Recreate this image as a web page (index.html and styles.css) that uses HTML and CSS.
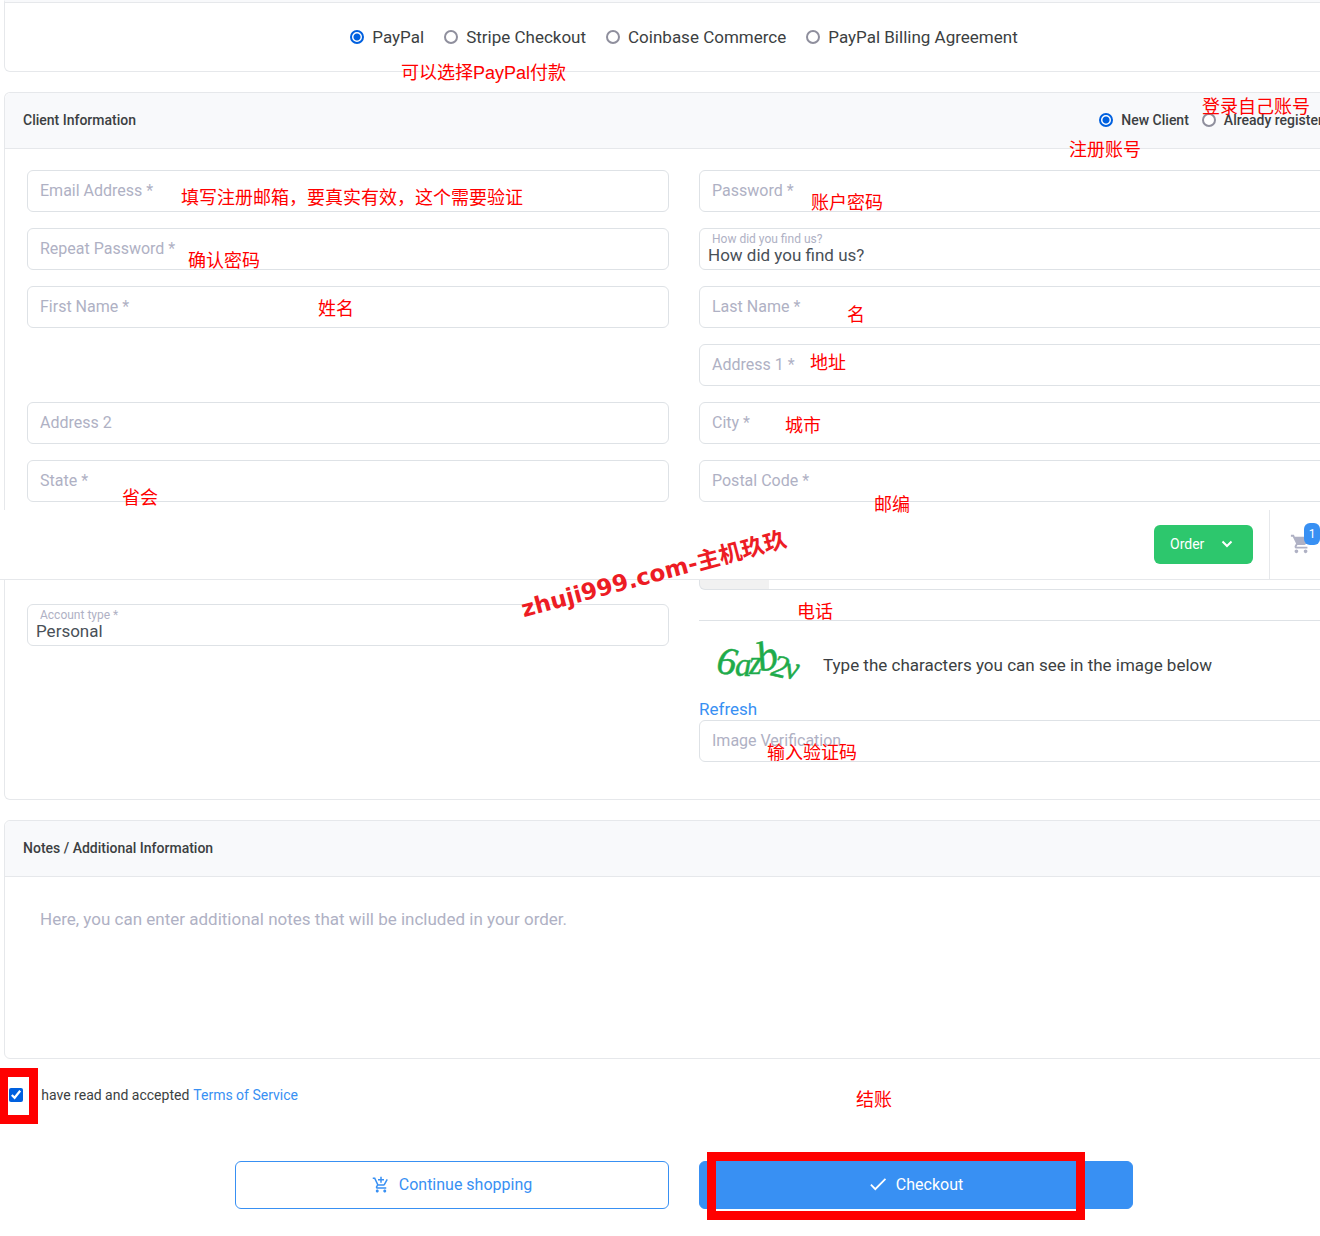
FILE: index.html
```
<!DOCTYPE html>
<html lang="en">
<head>
    <meta charset="UTF-8">
    <meta name="viewport" content="width=device-width, initial-scale=1.0">
    <title>Checkout</title>
    <link rel="stylesheet" href="styles.css">
</head>
<body>
    <form class="page">
        <!-- Payment method -->
        <section class="card payment">
            <div class="payment-options">
                <label><input type="radio" name="payment" checked> PayPal</label>
                <label><input type="radio" name="payment"> Stripe Checkout</label>
                <label><input type="radio" name="payment"> Coinbase Commerce</label>
                <label><input type="radio" name="payment"> PayPal Billing Agreement</label>
            </div>
        </section>

        <!-- Client information -->
        <section class="card client-top">
            <div class="card-header">
                <h2>Client Information</h2>
                <div class="client-type">
                    <label><input type="radio" name="client" checked> New Client</label>
                    <label><input type="radio" name="client"> Already registered?</label>
                </div>
            </div>
            <div class="form-grid">
                <div class="field">
                    <input type="email" id="email">
                    <label for="email">Email Address *</label>
                </div>
                <div class="field">
                    <input type="password" id="password">
                    <label for="password">Password *</label>
                </div>
                <div class="field">
                    <input type="password" id="password2">
                    <label for="password2">Repeat Password *</label>
                </div>
                <div class="field filled">
                    <select id="source"><option>How did you find us?</option></select>
                    <label for="source">How did you find us?</label>
                </div>
                <div class="field">
                    <input type="text" id="firstname">
                    <label for="firstname">First Name *</label>
                </div>
                <div class="field">
                    <input type="text" id="lastname">
                    <label for="lastname">Last Name *</label>
                </div>
                <div class="field right">
                    <input type="text" id="address1">
                    <label for="address1">Address 1 *</label>
                </div>
                <div class="field">
                    <input type="text" id="address2">
                    <label for="address2">Address 2</label>
                </div>
                <div class="field">
                    <input type="text" id="city">
                    <label for="city">City *</label>
                </div>
                <div class="field">
                    <input type="text" id="state">
                    <label for="state">State *</label>
                </div>
                <div class="field">
                    <input type="text" id="postcode">
                    <label for="postcode">Postal Code *</label>
                </div>
            </div>
        </section>

        <!-- Top bar -->
        <nav class="topbar">
            <button type="button" class="order-button">Order
                <svg width="12" height="8" viewBox="0 0 12 8"><path d="M1.5 1.5L6 6l4.500-4.500" fill="none" stroke="#fff" stroke-width="2"/></svg>
            </button>
            <a href="#cart" class="cart" aria-label="Cart">
                <svg width="22" height="22" viewBox="0 0 24 24"><path fill="#afb1c4" d="M7 18c-1.1 0-1.99.9-1.99 2S5.9 22 7 22s2-.9 2-2-.9-2-2-2zM1 2v2h2l3.6 7.59-1.35 2.45c-.16.28-.25.61-.25.96 0 1.1.9 2 2 2h12v-2H7.42c-.14 0-.25-.11-.25-.25l.03-.12.9-1.63h7.45c.75 0 1.41-.41 1.75-1.03l3.58-6.49A1 1 0 0 0 20 4H5.21l-.94-2H1zm16 16c-1.1 0-1.99.9-1.99 2s.89 2 1.99 2 2-.9 2-2-.9-2-2-2z"/></svg>
                <span class="badge">1</span>
            </a>
        </nav>

        <section class="card client-bottom">
            <div class="column">
                <div class="field filled">
                    <select id="account"><option>Personal</option></select>
                    <label for="account">Account type *</label>
                </div>
            </div>
            <div class="column">
                <div class="phone"></div>
                <div class="captcha">
                    <svg width="88" height="44" viewBox="0 0 88 44" fill="#1eab4b" stroke="#1eab4b" stroke-width=".5" font-family="Liberation Serif, serif" font-style="italic">
                        <text x="0" y="34" font-size="39" transform="rotate(10 10 34)">6</text>
                        <text x="20" y="36" font-size="33">a</text>
                        <text x="34" y="34" font-size="33">z</text>
                        <text x="45" y="32" font-size="42" transform="rotate(-14 45 32)">b</text>
                        <text x="55" y="35" font-size="32" transform="rotate(14 55 35)">2</text>
                        <text x="69" y="38" font-size="32" transform="rotate(6 69 38)">v</text>
                    </svg>
                    <span>Type the characters you can see in the image below</span>
                </div>
                <a href="#refresh" class="refresh">Refresh</a>
                <div class="field">
                    <input type="text" id="verification">
                    <label for="verification">Image Verification</label>
                </div>
            </div>
        </section>

        <!-- Notes -->
        <section class="card">
            <div class="card-header">
                <h2><label for="notes">Notes / Additional Information</label></h2>
            </div>
            <textarea id="notes" placeholder="Here, you can enter additional notes that will be included in your order."></textarea>
        </section>

        <div class="terms">
            <input type="checkbox" id="terms" checked>
            <label for="terms">I have read and accepted</label>
            <a href="#tos">Terms of Service</a>
        </div>

        <div class="actions">
            <button type="button" class="action outline">
                <svg width="18" height="18" viewBox="0 0 24 24"><path fill="#3890f3" d="M11 9h2V6h3V4h-3V1h-2v3H8v2h3v3zm-4 9c-1.1 0-1.99.9-1.99 2S5.9 22 7 22s2-.9 2-2-.9-2-2-2zm10 0c-1.1 0-1.99.9-1.99 2s.89 2 1.99 2 2-.9 2-2-.9-2-2-2zm-9.83-3.25l.03-.12.9-1.63h7.45c.75 0 1.41-.41 1.75-1.03l3.86-7.01L19.42 4h-.01l-1.1 2-2.76 5H8.53l-.13-.27L6.16 6l-.95-2-.94-2H1v2h2l3.6 7.59-1.35 2.45c-.16.28-.25.61-.25.96 0 1.1.9 2 2 2h12v-2H7.42c-.13 0-.25-.11-.25-.25z"/></svg>
                Continue shopping
            </button>
            <button type="submit" class="action primary">
                <svg width="18" height="18" viewBox="2 3 20 20"><path fill="#fff" d="M9 16.17L4.83 12l-1.42 1.41L9 19 21 7l-1.41-1.41z"/></svg>
                Checkout
            </button>
        </div>
    </form>

    <!-- Annotations -->
    <div class="notes" lang="zh-CN">
        <span class="note n-paypal">可以选择PayPal付款</span>
        <span class="note n-login">登录自己账号</span>
        <span class="note n-register">注册账号</span>
        <span class="note n-email">填写注册邮箱，要真实有效，这个需要验证</span>
        <span class="note n-password">账户密码</span>
        <span class="note n-repeat">确认密码</span>
        <span class="note n-name">姓名</span>
        <span class="note n-last">名</span>
        <span class="note n-address">地址</span>
        <span class="note n-city">城市</span>
        <span class="note n-state">省会</span>
        <span class="note n-postcode">邮编</span>
        <span class="note n-phone">电话</span>
        <span class="note n-captcha">输入验证码</span>
        <span class="note n-checkout">结账</span>
        <span class="watermark">zhuji999.com-主机玖玖</span>
        <span class="frame frame-terms"></span>
        <span class="frame frame-checkout"></span>
    </div>
</body>
</html>
```
FILE: styles.css
```
* {
    box-sizing: border-box;
}
body {
    margin: 0;
    position: relative;
    overflow-x: hidden;
    background: #fff;
    color: #3c3f42;
    font: 17px/20px Roboto, "Noto Sans CJK SC", sans-serif;
}
input, select, textarea, button {
    font: inherit;
    color: inherit;
}
a {
    color: #3890f3;
    text-decoration: none;
}
/* the form is wider than the window */
.page {
    margin: 0 -44px 0 4px;
    padding-bottom: 27px;
}
.card {
    border: 1px solid #e6e8eb;
    border-radius: 6px;
    margin-bottom: 20px;
}
.card-header {
    display: flex;
    justify-content: space-between;
    align-items: center;
    height: 56px;
    padding: 0 18px 1px;
    background: #f8f9fb;
    border-bottom: 1px solid #e6e8eb;
    border-radius: 6px 6px 0 0;
    font-size: 14px;
    font-weight: 500;
}
.card-header h2 {
    margin: 0;
    font-size: 14px;
    font-weight: 500;
}
.payment {
    border-top: 2px solid #f8f9fb;
    border-radius: 0 0 6px 6px;
}
.payment-options {
    display: flex;
    justify-content: center;
    gap: 20px;
    border-top: 1px solid #e6e8eb;
    padding: 24px 0;
}
.payment-options label, .client-type label {
    display: flex;
    align-items: center;
    gap: 8px;
}
.client-type {
    display: flex;
    gap: 13px;
}
input[type="radio"] {
    appearance: none;
    width: 14px;
    height: 14px;
    margin: 0;
    border: 2px solid #8f8f9d;
    border-radius: 50%;
    background: #fff;
}
input[type="radio"]:checked {
    border-color: #0060df;
    background: radial-gradient(#0060df 3px, #fff 4px);
}

/* Fields */
.form-grid {
    display: grid;
    grid-template-columns: 1fr 1fr;
    gap: 16px 30px;
    padding: 21px 22px 8px;
}
.field {
    position: relative;
    height: 42px;
}
.field.right {
    grid-column: 2;
}
.field input, .field select {
    display: block;
    width: 100%;
    height: 100%;
    padding: 0 12px;
    border: 1px solid #dee2e6;
    border-radius: 6px;
    background: #fff;
}
.field label {
    position: absolute;
    left: 13px;
    top: 11px;
    color: #afb1c4;
    font-size: 16px;
}
.field select {
    appearance: none;
    padding: 12px 8px 0;
    color: #495057;
}
.field.filled label {
    top: 4px;
    font-size: 12px;
    line-height: 14px;
}
.client-top {
    margin: 0;
    border-bottom: 0;
    border-radius: 6px 6px 0 0;
}
.client-bottom {
    display: grid;
    grid-template-columns: 1fr 1fr;
    gap: 30px;
    padding: 0 22px 37px;
    border-top: 0;
    border-radius: 0 0 6px 6px;
}
.client-bottom > .column:first-child {
    padding-top: 24px;
}
.phone {
    height: 41px;
    border-bottom: 1px solid #dee2e6;
}
.phone::before {
    content: "";
    display: block;
    height: 9px;
    border: 1px solid #dee2e6;
    border-top: 0;
    border-radius: 0 0 6px 6px;
    background: linear-gradient(to right, #f1f1f1 69px, #fff 69px);
}
.captcha {
    display: flex;
    align-items: center;
    gap: 20px;
    height: 78px;
    padding: 10px 0 0 16px;
}
.captcha svg {
    margin-bottom: 6px;
    overflow: visible;
}
.refresh {
    display: block;
    height: 21px;
}

/* Top bar */
.topbar {
    display: flex;
    justify-content: flex-end;
    align-items: center;
    gap: 16px;
    height: 70px;
    margin: 0 44px 0 -4px;
    border-bottom: 1px solid #e6e8eb;
    background: #fff;
}
.order-button {
    display: flex;
    justify-content: space-between;
    align-items: center;
    width: 99px;
    height: 39px;
    padding: 0 20px 1px 16px;
    border: 0;
    border-radius: 6px;
    background: #2dc76d;
    color: #fff;
    font-size: 14px;
}
.cart {
    position: relative;
    width: 51px;
    height: 100%;
    padding: 23px 0 0 20px;
    border-left: 1px solid #e6e8eb;
}
.badge {
    position: absolute;
    top: 13px;
    right: 0;
    width: 16px;
    height: 22px;
    border-radius: 6px;
    background: #3890f3;
    color: #fff;
    font-size: 12px;
    line-height: 22px;
    text-align: center;
}

textarea {
    display: block;
    width: 100%;
    height: 181px;
    padding: 32px 35px;
    border: 0;
    background: none;
    resize: none;
}
textarea::placeholder {
    color: #afb1c4;
}
.terms {
    display: flex;
    align-items: center;
    gap: 4px;
    padding: 6px 5px;
    font-size: 14px;
}
.terms input {
    width: 14px;
    height: 14px;
    margin: 0 7px 0 0;
    accent-color: #0060df;
}
.actions {
    display: flex;
    justify-content: center;
    gap: 30px;
    margin-top: 50px;
}
.action {
    display: flex;
    justify-content: center;
    align-items: center;
    gap: 9px;
    width: 33%;
    max-width: 434px;
    height: 48px;
    padding-bottom: 2px;
    border: 1px solid #3890f3;
    border-radius: 6px;
    font-size: 16px;
}
.outline {
    background: #fff;
    color: #3890f3;
}
.primary {
    background: #3890f3;
    color: #fff;
}

/* Annotations */
.note {
    position: absolute;
    color: #f00;
    font: 18px/24px "Liberation Sans", "Noto Sans CJK SC", sans-serif;
    white-space: nowrap;
}
.n-paypal { left: 401px; top: 61px; }
.n-login { left: 1202px; top: 95px; }
.n-register { left: 1069px; top: 138px; }
.n-email { left: 181px; top: 186px; }
.n-password { left: 811px; top: 191px; }
.n-repeat { left: 188px; top: 249px; }
.n-name { left: 318px; top: 297px; }
.n-last { left: 847px; top: 303px; }
.n-address { left: 810px; top: 351px; }
.n-city { left: 785px; top: 414px; }
.n-state { left: 122px; top: 486px; }
.n-postcode { left: 874px; top: 493px; }
.n-phone { left: 797px; top: 600px; }
.n-captcha { left: 767px; top: 741px; }
.n-checkout { left: 856px; top: 1088px; }
.watermark {
    position: absolute;
    left: 517px;
    top: 559px;
    color: #ed1c24;
    font: bold 23px/30px "DejaVu Sans", "Noto Sans CJK SC", sans-serif;
    white-space: nowrap;
    transform: rotate(-15deg);
}
.frame {
    position: absolute;
    border: 9px solid #f00;
}
.frame-terms {
    left: -1px;
    top: 1068px;
    width: 39px;
    height: 56px;
}
.frame-checkout {
    left: 707px;
    top: 1152px;
    width: 378px;
    height: 68px;
}
```
